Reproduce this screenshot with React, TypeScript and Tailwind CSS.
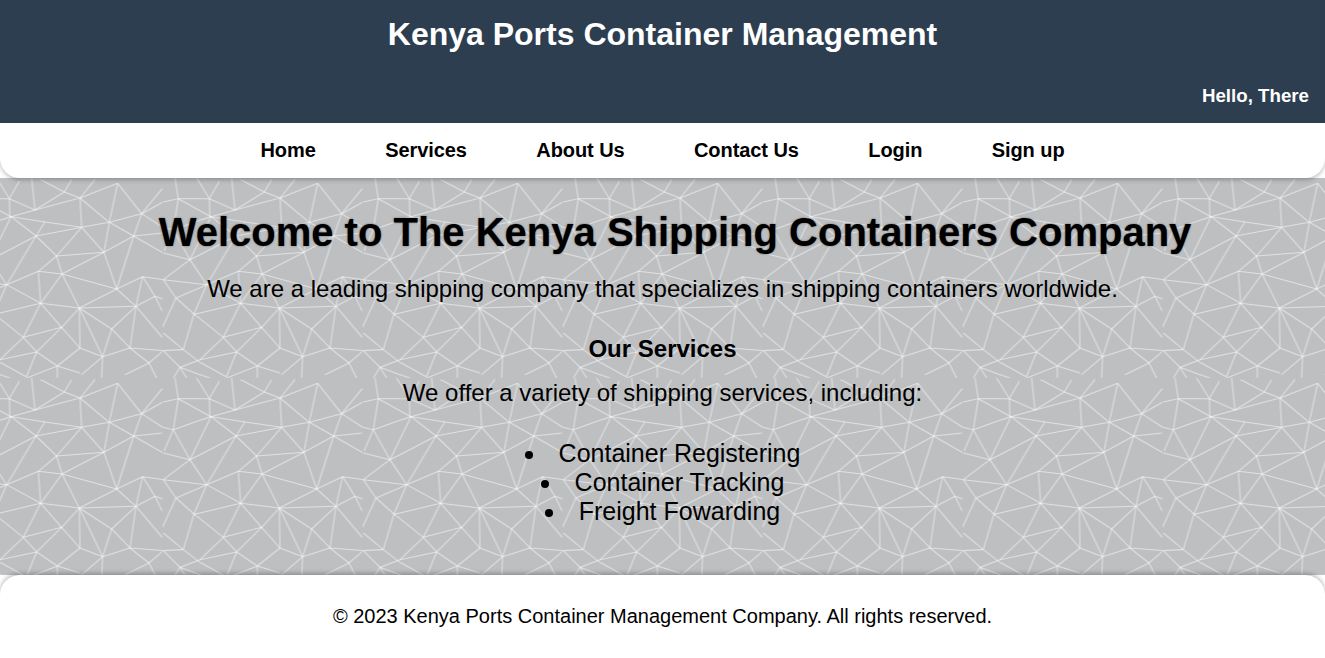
const leftLines = `M0 16L28 62L58 10M0 62L28 62L105 96L95 0M28 62L30 116M105 96L193 42L122 5M193 42L215 5M193 42L240 60L105 96M240 60L285 5M240 60L353 16M353 16L328 133M353 16L425 107M240 60L245 148M240 60L328 133M33 116L105 96M33 116L135 132L245 148M0 127L33 116L108 174M0 98L33 116M33 116L0 184M108 174L135 132M108 174L245 148M108 174L0 230M108 174L20 320M328 133L245 148M328 133L425 107M328 133L401 174M328 133L312 223M245 148L312 223M245 148L170 234M425 107L401 174M425 107L487 32M425 107L490 72M425 107L488 148M401 174L312 223L186 288M401 174L350 333M401 174L487 165M401 174L490 225M170 234L312 223M170 234L108 174M170 234L186 288M20 320L115 280L170 234M115 280L186 288M115 280L122 376M186 288L122 376M186 288L238 390M186 288L350 333M312 223L350 333M20 320L122 376M0 318L20 320L0 366M0 290L20 320L0 329M350 333L238 390M350 333L428 296M350 333L408 385M428 296L408 385M428 296L490 305M428 296L465 355L487 400M465 355L487 362M408 385L465 355M408 385L238 390M408 385L335 453M408 385L390 510M408 385L487 478M122 376L238 390M122 376L0 405M122 376L70 478M122 376L185 448M185 448L238 390M185 448L70 478M185 448L110 522M238 390L240 510M238 390L308 536M238 390L335 453M335 453L308 536M335 453L390 510M240 510L308 536M185 448L240 510M70 478L0 545M70 478L110 522M110 522L0 545M110 522L172 564M110 522L80 595M172 564L240 510M172 564L80 600M0 422L70 478M0 553L80 597M308 536L245 590M308 536L390 510M308 536L305 600M172 564L172 600M172 564L240 585M390 510L447 555M390 510L490 518M447 555L470 600M447 555L375 590M447 555L490 518M0 590L30 600`;

const rightLines = `M490 72L535 62L525 0M535 62L600 62M535 62L600 98M590 0L600 16M520 155L488 148M520 155L535 62M520 155L600 127M520 155L570 245M520 155L492 220M490 225L570 245M570 245L600 230M570 245L600 184M570 245L490 305M570 245L600 290M490 305L600 318M490 305L528 360M528 360L600 329M528 360L582 408M528 360L488 447M600 366L582 408L600 405M582 408L550 515M582 408L600 422M550 515L490 465M550 515L490 518M550 515L600 553M490 518L540 568L600 545M540 568L520 600M540 568L560 600M540 568L600 590`;

function Mesh({ lines }: { lines: string }) {
  return (
    <>
      {lines
        .split("M")
        .filter(Boolean)
        .map((d, i) => (
          <path key={i} d={"M" + d} fill="none" stroke="#ffffff" strokeOpacity="0.52" strokeWidth="3.2" />
        ))}
    </>
  );
}

export default function App() {
  return (
    <div className="flex h-[658px] flex-col overflow-hidden font-['Liberation_Sans',Arial,sans-serif] text-black">
      <header className="relative flex h-[123px] flex-col bg-[#2c3e50] pt-[16px] text-white">
        <h1 className="text-center text-[32px] leading-[37px] font-bold">Kenya Ports Container Management</h1>
        <p className="mt-[32px] pr-4 text-right text-[18.72px] leading-[21px] font-bold">Hello, There</p>
      </header>
      <nav className="relative z-10 flex h-[55px] items-center justify-center gap-[69.4px] rounded-b-[20px] bg-white pb-[2px] text-xl font-bold tracking-[-0.07px] shadow-[0_2px_4px_rgba(0,0,0,0.25)]">
        <a>Home</a>
        <a>Services</a>
        <a>About Us</a>
        <a>Contact Us</a>
        <a>Login</a>
        <a>Sign up</a>
      </nav>
      <main className="relative flex-1 bg-[#bebfc1] text-center">
        <svg className="absolute inset-0 h-full w-full" aria-hidden="true">
          <defs>
            <pattern id="mesh" x="162.5" y="0" width="200" height="200" patternUnits="userSpaceOnUse">
              <g transform="translate(37.5 0) scale(0.3333)">
                <Mesh lines={leftLines} />
              </g>
              <g transform="translate(-162.5 0) scale(0.3333)">
                <Mesh lines={rightLines} />
              </g>
            </pattern>
          </defs>
          <rect width="100%" height="100%" fill="url(#mesh)" />
        </svg>
        <div className="relative pt-[31px]">
          <h2 className="ml-[25px] text-[40px] leading-[46px] font-bold [text-shadow:0_0_2px_rgba(0,0,0,0.5)]">Welcome to The Kenya Shipping Containers Company</h2>
          <p className="mt-[20px] text-2xl leading-[28px]">We are a leading shipping company that specializes in shipping containers worldwide.</p>
          <h3 className="mt-[32px] text-2xl leading-[28px] font-bold">Our Services</h3>
          <p className="mt-[16px] text-2xl leading-[28px]">We offer a variety of shipping services, including:</p>
          <ul className="mt-[32px] list-inside list-disc text-[25px] leading-[29px]">
            <li>Container Registering</li>
            <li>Container Tracking</li>
            <li>Freight Fowarding</li>
          </ul>
        </div>
      </main>
      <footer className="relative z-10 flex h-[83px] items-center justify-center rounded-t-[20px] bg-white pb-[2px] text-xl shadow-[0_-2px_4px_rgba(0,0,0,0.25)]">
        <p>© 2023 Kenya Ports Container Management Company. All rights reserved.</p>
      </footer>
    </div>
  );
}
